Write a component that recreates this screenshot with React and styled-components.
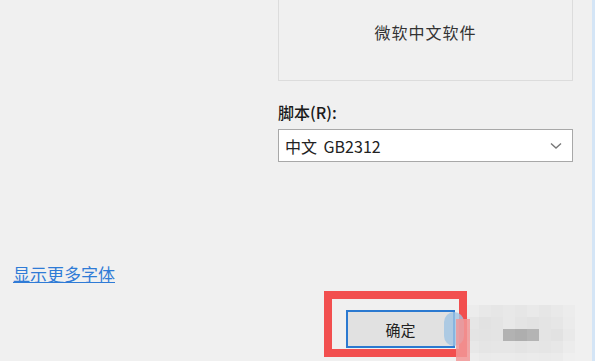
import styled, { createGlobalStyle } from "styled-components";

const GlobalStyle = createGlobalStyle`
  html, body {
    margin: 0;
    padding: 0;
    background: #f0f0f0;
  }
  * {
    box-sizing: border-box;
  }
`;

const FONT = `"Microsoft YaHei", "Noto Sans CJK SC", "Noto Sans", sans-serif`;

const Page = styled.div`
  width: 595px;
  height: 361px;
  overflow: hidden;
  display: flex;
  background: #f0f0f0;
  border-right: 3px solid #d4e5f6;
  font-family: ${FONT};
`;

const LeftColumn = styled.div`
  width: 278px;
  padding: 262px 0 0 13px;
`;

const MoreFonts = styled.a`
  font-size: 17px;
  line-height: 20px;
  color: #2f7bd6;
  text-decoration: underline;
  cursor: pointer;
`;

const RightColumn = styled.div`
  width: 295px;
  display: flex;
  flex-direction: column;
`;

const Preview = styled.div`
  height: 81px;
  border: 1px solid #dcdcdc;
  border-top: none;
  display: flex;
  justify-content: center;
  padding-top: 21px;
  font-size: 16px;
  line-height: 22px;
  color: #333;
  letter-spacing: 1px;
`;

const Label = styled.div`
  margin-top: 21px;
  font-size: 16px;
  line-height: 20px;
  font-weight: 500;
  color: #1a1a1a;
`;

const Select = styled.div`
  margin-top: 7px;
  height: 33px;
  background: #fff;
  border: 1px solid #a8a8a8;
  display: flex;
  align-items: center;
  justify-content: space-between;
  padding: 0 10px 0 6px;
  font-size: 16px;
  color: #222;
  word-spacing: 3px;
`;

const Chevron = () => (
  <svg width="12" height="8" viewBox="0 0 12 8">
    <path d="M1 1.5 L6 6 L11 1.5" fill="none" stroke="#777" strokeWidth="1.4" />
  </svg>
);

const Footer = styled.div`
  margin-top: 129px;
  padding-left: 46px;
  display: flex;
  align-items: flex-start;
  position: relative;
`;

const Highlight = styled.div`
  width: 143px;
  height: 66px;
  border: 8px solid #f24f4f;
  padding: 11px 4px 0 14px;
`;

const OkButton = styled.button`
  width: 109px;
  height: 38px;
  border: 2px solid #2b79d0;
  background: #e1e1e1;
  font-family: ${FONT};
  font-size: 15px;
  color: #222;
  padding: 0;
`;

const Mosaic = styled.div`
  margin-top: 14px;
  width: 108px;
  height: 56px;
  display: grid;
  grid-template-columns: repeat(9, 12px);
  grid-auto-rows: 12px;
`;

const Cell = styled.div`
  background: ${(p) => p.$c};
`;

const Blob = styled.div`
  position: absolute;
  left: ${(p) => p.$x}px;
  top: ${(p) => p.$y}px;
  width: ${(p) => p.$w}px;
  height: ${(p) => p.$h}px;
  background: ${(p) => p.$c};
  border-radius: ${(p) => p.$r || 0}px;
`;

const mosaic = [
  "#ececec", "#e8e8e8", "#e6e6e6", "#e8e8e8", "#e6e6e6", "#e9e9e9", "#e6e6e6", "#e9e9e9", "#ececec",
  "#e6e6e6", "#e2e2e2", "#e4e4e4", "#e8e8e8", "#e4e4e4", "#e2e2e2", "#e4e4e4", "#e6e6e6", "#ebebeb",
  "#e4e4e4", "#e3e3e3", "#e4e4e4", "#b2b2b2", "#aeaeae", "#b4b4b4", "#e4e4e4", "#e2e2e2", "#e9e9e9",
  "#e8e8e8", "#e5e5e5", "#e6e6e6", "#e6e6e6", "#e4e4e4", "#e6e6e6", "#e5e5e5", "#e7e7e7", "#ececec",
  "#ededed", "#eaeaea", "#ebebeb", "#ebebeb", "#eaeaea", "#ebebeb", "#eaeaea", "#ebebeb", "#efefef",
];

export default function App() {
  return (
    <>
      <GlobalStyle />
      <Page>
        <LeftColumn>
          <MoreFonts>显示更多字体</MoreFonts>
        </LeftColumn>
        <RightColumn>
          <Preview>微软中文软件</Preview>
          <Label>脚本(R):</Label>
          <Select>
            <span>中文 GB2312</span>
            <Chevron />
          </Select>
          <Footer>
            <Highlight>
              <OkButton>确定</OkButton>
            </Highlight>
            <Mosaic>
              {mosaic.map((c, i) => (
                <Cell key={i} $c={c} />
              ))}
            </Mosaic>
            <Blob $x={166} $y={21} $w={20} $h={34} $r={17} $c="rgba(160, 196, 228, 0.8)" />
            <Blob $x={178} $y={28} $w={14} $h={42} $c="rgba(242, 150, 150, 0.85)" />
          </Footer>
        </RightColumn>
      </Page>
    </>
  );
}
